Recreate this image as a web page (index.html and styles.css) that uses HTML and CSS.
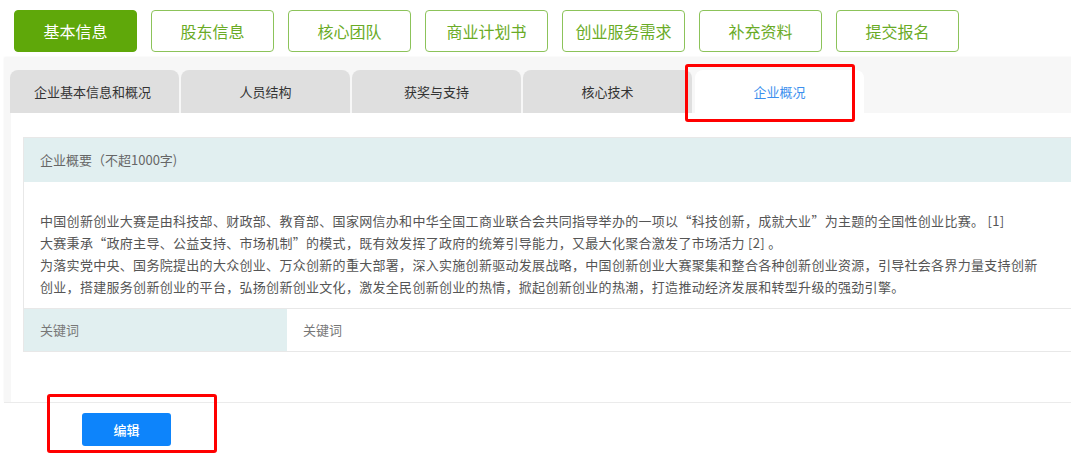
FILE: index.html
```html
<!DOCTYPE html>
<html lang="zh-CN">
<head>
    <meta charset="UTF-8">
    <title>企业概况</title>
    <link rel="stylesheet" href="styles.css">
</head>
<body>
    <div class="steps">
        <button class="step active">基本信息</button>
        <button class="step">股东信息</button>
        <button class="step">核心团队</button>
        <button class="step">商业计划书</button>
        <button class="step">创业服务需求</button>
        <button class="step">补充资料</button>
        <button class="step">提交报名</button>
    </div>

    <div class="panel">
        <div class="tabs">
            <div class="tab">企业基本信息和概况</div>
            <div class="tab">人员结构</div>
            <div class="tab">获奖与支持</div>
            <div class="tab">核心技术</div>
            <div class="tab current">企业概况</div>
        </div>
        <div class="tab-body">
            <div class="section">
                <div class="section-head">企业概要（不超1000字)</div>
                <div class="section-text">
                    <p>中国创新创业大赛是由科技部、财政部、教育部、国家网信办和中华全国工商业联合会共同指导举办的一项以“科技创新，成就大业”为主题的全国性创业比赛。 [1]</p>
                    <p>大赛秉承“政府主导、公益支持、市场机制”的模式，既有效发挥了政府的统筹引导能力，又最大化聚合激发了市场活力 [2] 。</p>
                    <p>为落实党中央、国务院提出的大众创业、万众创新的重大部署，深入实施创新驱动发展战略，中国创新创业大赛聚集和整合各种创新创业资源，引导社会各界力量支持创新创业，搭建服务创新创业的平台，弘扬创新创业文化，激发全民创新创业的热情，掀起创新创业的热潮，打造推动经济发展和转型升级的强劲引擎。</p>
                </div>
                <div class="kw-row">
                    <div class="kw-label">关键词</div>
                    <div class="kw-value">关键词</div>
                </div>
            </div>
        </div>
    </div>

    <div class="actions">
        <button class="edit-btn">编辑</button>
    </div>

    <div class="mark mark-tab"></div>
    <div class="mark mark-edit"></div>
</body>
</html>
```

FILE: styles.css
```css
* {
    margin: 0;
    padding: 0;
    box-sizing: border-box;
}

body {
    font-family: "Noto Sans CJK SC", "Noto Sans", sans-serif;
    background-color: #fff;
    color: #333;
    width: 1071px;
    height: 457px;
    overflow: hidden;
    position: relative;
}

.steps {
    display: flex;
    gap: 14px;
    padding: 10px 0 0 14px;
}

.step {
    width: 123px;
    height: 42px;
    font-family: inherit;
    font-size: 16px;
    color: #6aab26;
    background: #fff;
    border: 1px solid #8cc35a;
    border-radius: 4px;
}

.step.active {
    background-color: #5fa80a;
    border-color: #5fa80a;
    color: #fff;
}

.panel {
    margin: 6px 0 0 4px;
    width: 1100px;
    height: 345px;
    padding: 12px 0 0 6px;
    background-color: #f7f7f7;
    box-shadow: 0 -1px 2px rgba(0, 0, 0, 0.05);
    border-bottom: 1px solid #ebebeb;
    display: flex;
    flex-direction: column;
}

.tabs {
    display: flex;
    gap: 2px;
}

.tab {
    width: 169px;
    height: 43px;
    line-height: 43px;
    text-align: center;
    font-size: 13px;
    color: #333;
    background-color: #dfdfdf;
    border-radius: 8px 8px 0 0;
}

.tab:first-child {
    text-indent: -4px;
}

.tab.current {
    margin-left: 1px;
    background-color: #fff;
    color: #3c8fee;
}

.tab-body {
    flex: 1;
    margin-left: 1px;
    padding: 24px 0 0 12px;
    background-color: #fff;
}

.section {
    border: 1px solid #e8e8e8;
    border-right: none;
    font-size: 13px;
}

.section-head {
    height: 44px;
    line-height: 44px;
    padding-left: 16px;
    color: #666;
    background-color: #e1eff0;
}

.section-text {
    width: 1022px;
    padding: 28px 0 10px 16px;
    line-height: 22px;
    letter-spacing: 0.3px;
    color: #555;
}

.kw-row {
    display: flex;
    height: 43px;
    line-height: 42px;
    border-top: 1px solid #e8e8e8;
    color: #777;
}

.kw-label {
    width: 263px;
    padding-left: 16px;
    background-color: #e1eff0;
}

.kw-value {
    padding-left: 16px;
}

.actions {
    padding: 10px 0 0 82px;
}

.edit-btn {
    width: 89px;
    height: 33px;
    font-family: inherit;
    font-size: 13px;
    font-weight: 500;
    color: #fff;
    background-color: #0d84fb;
    border: none;
    border-radius: 3px;
}

/* red annotation boxes */
.mark {
    position: absolute;
    border: 3px solid #ff0000;
    border-radius: 3px;
}

.mark-tab {
    left: 685px;
    top: 64px;
    width: 170px;
    height: 58px;
}

.mark-edit {
    left: 47px;
    top: 394px;
    width: 170px;
    height: 59px;
}
```
